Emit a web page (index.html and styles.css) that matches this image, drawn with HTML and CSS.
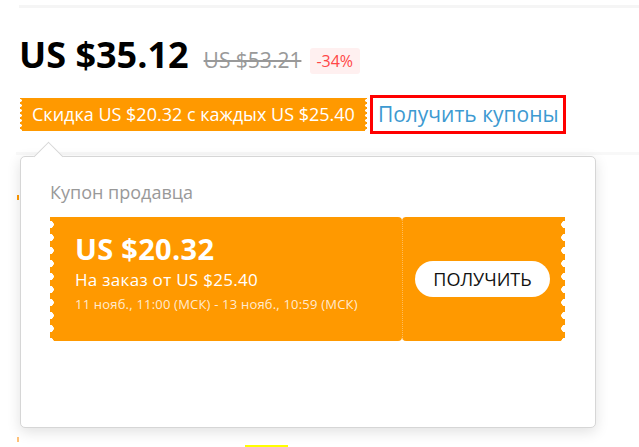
FILE: index.html
```html
<!DOCTYPE html>
<html lang="ru">
<head>
  <meta charset="UTF-8">
  <title>Купоны продавца</title>
  <link rel="stylesheet" href="styles.css">
</head>
<body>

  <div class="page">
    <div class="topline"></div>

    <div class="price-row">
      <span class="price">US $35.12</span>
      <span class="old-price">US $53.21</span>
      <span class="discount">-34%</span>
    </div>

    <div class="coupon-row">
      <span class="coupon-tag">Скидка US $20.32 с каждых US $25.40</span>
      <a class="coupon-link" href="#">Получить купоны</a>
    </div>

    <div class="divider"></div>

    <div class="below">
      <div class="mark"></div>
      <div class="mark mark-light"></div>
      <div class="highlight"></div>
    </div>

    <div class="popup">
      <div class="popup-arrow"></div>
      <div class="popup-title">Купон продавца</div>

      <div class="ticket">
        <div class="ticket-main">
          <div class="ticket-amount">US $20.32</div>
          <div class="ticket-min">На заказ от US $25.40</div>
          <div class="ticket-date">11 нояб., 11:00 (МСК) - 13 нояб., 10:59 (МСК)</div>
        </div>
        <div class="ticket-side">
          <button class="ticket-btn">ПОЛУЧИТЬ</button>
        </div>
      </div>
    </div>
  </div>

</body>
</html>
```

FILE: styles.css
```css
body {
  margin: 0;
  font-family: 'Open Sans', 'Liberation Sans', sans-serif;
  background: #fff;
  color: #000;
}

.page {
  position: relative;
  height: 447px;
  overflow: hidden;
}

.topline {
  margin: 5px 0 0 19px;
  height: 3px;
  background: #f5f5f5;
}

/* price */

.price-row {
  display: flex;
  align-items: baseline;
  margin: 25px 0 0 19px;
  height: 44px;
}

.price {
  font-size: 36px;
  font-weight: bold;
  line-height: 44px;
}

.old-price {
  margin-left: 15px;
  font-size: 21px;
  color: #999;
  text-decoration: line-through;
}

.discount {
  margin-left: 9px;
  padding: 0 7px 0 6px;
  height: 26px;
  line-height: 26px;
  font-size: 16px;
  color: #ff4747;
  background: #fff0f0;
  border-radius: 3px;
  position: relative;
  top: -1px;
}

/* coupon line */

.coupon-row {
  display: flex;
  align-items: center;
  margin: 18px 0 0 20px;
  height: 39px;
}

.coupon-tag {
  height: 33px;
  line-height: 33px;
  padding: 0 12px;
  font-size: 18px;
  color: #fff;
  background:
    radial-gradient(circle at 0 50%, #fff 1.5px, transparent 2px) left top / 4px 5px repeat-y,
    radial-gradient(circle at 100% 50%, #fff 1.5px, transparent 2px) right top / 4px 5px repeat-y,
    #ff9900;
}

.coupon-link {
  margin-left: 3px;
  height: 33px;
  line-height: 33px;
  padding: 0 4px 0 5px;
  border: 3px solid #ff0000;
  font-size: 21px;
  color: #3d9ad1;
  text-decoration: none;
}

.divider {
  margin: 18px 0 0 16px;
  height: 3px;
  background: #f8f8f8;
}

/* stuff under the popup */

.mark {
  margin: 40px 0 0 17px;
  width: 2px;
  height: 5px;
  background: #ff9900;
}

.mark-light {
  margin-top: 237px;
  background: #ffc27a;
}

.highlight {
  margin: 3px 0 0 245px;
  width: 43px;
  height: 2px;
  background: #ffff00;
}

/* popup */

.popup {
  position: absolute;
  top: 156px;
  left: 20px;
  box-sizing: border-box;
  width: 576px;
  height: 272px;
  padding: 23px 29px 0;
  background: #fff;
  border: 1px solid #d6d6d6;
  border-radius: 5px;
  box-shadow: 0 4px 14px rgba(0,0,0,0.12);
}

.popup-arrow {
  position: absolute;
  top: -11px;
  left: 17px;
  width: 20px;
  height: 20px;
  background: #fff;
  border-top: 1px solid #d6d6d6;
  border-left: 1px solid #d6d6d6;
  transform: rotate(45deg);
}

.popup-title {
  font-size: 18px;
  line-height: 24px;
  color: #999;
}

.ticket {
  display: flex;
  margin-top: 13px;
  width: 515px;
  height: 124px;
}

.ticket-main {
  width: 352px;
  box-sizing: border-box;
  padding: 14px 0 0 25px;
  color: #fff;
  border-radius: 0 4px 4px 0;
  background:
    radial-gradient(circle at 0 50%, #fff 3.5px, transparent 4px) left 1px / 8px 13px repeat-y,
    #ff9900;
}

.ticket-amount {
  font-size: 29px;
  font-weight: bold;
  line-height: 36px;
  letter-spacing: 0.3px;
}

.ticket-min {
  margin-top: 2px;
  font-size: 17px;
  line-height: 22px;
  letter-spacing: 0.3px;
}

.ticket-date {
  margin-top: 4px;
  font-size: 13px;
  line-height: 18px;
  letter-spacing: 0.2px;
  color: rgba(255,255,255,0.82);
}

.ticket-side {
  flex: 1;
  display: flex;
  align-items: center;
  padding-left: 12px;
  border-left: 1px dotted rgba(255,255,255,0.35);
  border-radius: 4px 0 0 4px;
  background:
    radial-gradient(circle at 100% 50%, #fff 3.5px, transparent 4px) right 1px / 8px 13px repeat-y,
    #ff9900;
}

.ticket-btn {
  width: 135px;
  height: 36px;
  border: none;
  border-radius: 18px;
  background: #fff;
  color: #111;
  font-family: 'Open Sans', 'Liberation Sans', sans-serif;
  font-size: 18px;
  padding: 0;
  cursor: pointer;
}
```
